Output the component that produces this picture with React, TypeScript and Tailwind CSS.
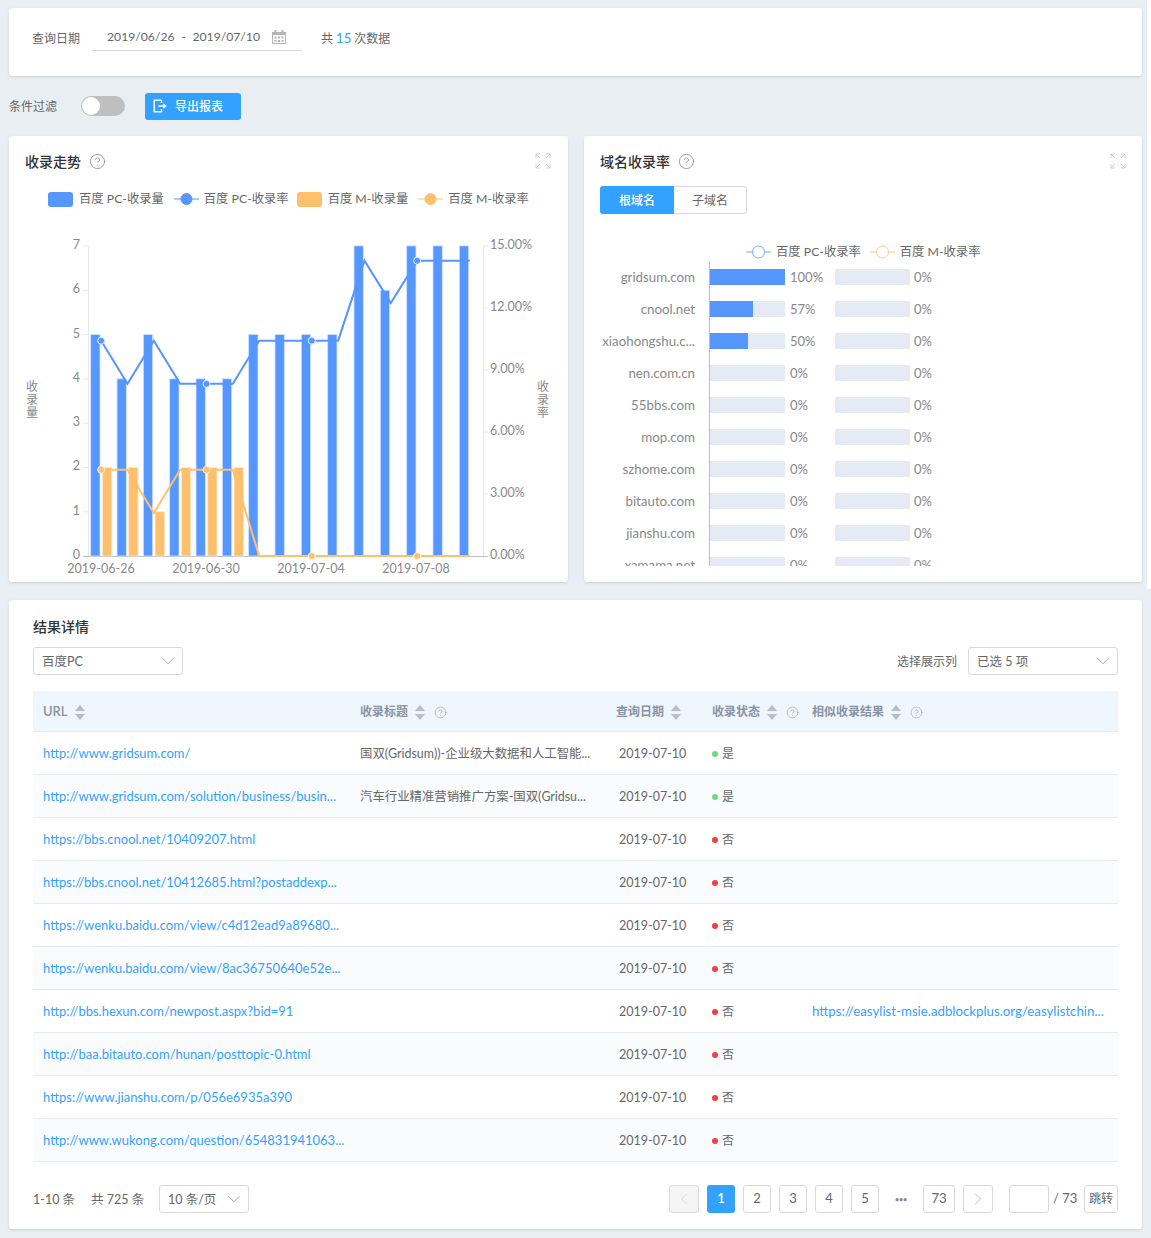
import type { ReactNode } from 'react';
import { ChevronDown, ChevronLeft, ChevronRight, CircleHelp } from 'lucide-react';

const blueBars = [5, 4, 5, 4, 4, 4, 5, 5, 5, 5, 7, 6, 7, 7, 7];
const orangeBars = [2, 2, 1, 2, 2, 2, 0, 0, 0, 0, 0, 0, 0, 0, 0];
const blueRate = [10.42, 8.33, 10.42, 8.33, 8.33, 8.33, 10.42, 10.42, 10.42, 10.42, 14.29, 12.24, 14.29, 14.29, 14.29];
const orangeRate = [4.17, 4.17, 2.08, 4.17, 4.17, 4.17, 0, 0, 0, 0, 0, 0, 0, 0, 0];

const domains = [
  ['gridsum.com', 100],
  ['cnool.net', 57],
  ['xiaohongshu.c...', 50],
  ['nen.com.cn', 0],
  ['55bbs.com', 0],
  ['mop.com', 0],
  ['szhome.com', 0],
  ['bitauto.com', 0],
  ['jianshu.com', 0],
  ['xamama.net', 0],
] as const;

const rows = [
  { url: 'http://www.gridsum.com/', title: '国双(Gridsum))-企业级大数据和人工智能...', ok: true },
  { url: 'http://www.gridsum.com/solution/business/busin...', title: '汽车行业精准营销推广方案-国双(Gridsu...', ok: true },
  { url: 'https://bbs.cnool.net/10409207.html' },
  { url: 'https://bbs.cnool.net/10412685.html?postaddexp...' },
  { url: 'https://wenku.baidu.com/view/c4d12ead9a89680...' },
  { url: 'https://wenku.baidu.com/view/8ac36750640e52e...' },
  { url: 'http://bbs.hexun.com/newpost.aspx?bid=91', similar: 'https://easylist-msie.adblockplus.org/easylistchin...' },
  { url: 'http://baa.bitauto.com/hunan/posttopic-0.html' },
  { url: 'https://www.jianshu.com/p/056e6935a390' },
  { url: 'http://www.wukong.com/question/654831941063...' },
];

const xAt = (i: number) => 88 + i * 26.33;
const yCount = (v: number) => 556 - v * 44.3;
const yRate = (v: number) => 556 - (v / 15) * 310;

function ExpandIcon() {
  return (
    <svg width="16" height="16" viewBox="0 0 16 16" fill="none" stroke="#c9cdd3" strokeWidth="1">
      <path d="M1 5V1h4M1 1l4 4M11 1h4v4M15 1l-4 4M1 11v4h4M1 15l4-4M11 15h4v-4M15 15l-4-4" />
    </svg>
  );
}

function SortIcon() {
  return (
    <svg width="10" height="15" viewBox="0 0 10 15" fill="#b6bdcb">
      <path d="M5 0L10 6H0zM0 9h10l-5 6z" />
    </svg>
  );
}

function Help() {
  return <CircleHelp size={17} strokeWidth={1} className="text-[#777]" />;
}

function Select({ label, width }: { label: string; width: string }) {
  return (
    <div className={`flex h-[28px] items-center justify-between rounded-[3px] border border-[#d9d9d9] bg-white pl-2 pr-[3px] text-[12.5px] text-[#666] ${width}`}>
      <span className="pt-[2px]">{label}</span>
      <ChevronDown size={22} strokeWidth={0.8} className="text-[#888]" />
    </div>
  );
}

function TrendChart() {
  return (
    <svg viewBox="9 226 559 356" className="block h-[356px] w-[559px]">
      <path d="M88.5 246V556M83 246h5M83 290.3h5M83 334.6h5M83 378.9h5M83 423.2h5M83 467.5h5M83 511.8h5" stroke="#e8e8e8" fill="none" />
      <path d="M483.5 246V556M483 246h5M483 308h5M483 370h5M483 432h5M483 494h5" stroke="#e8e8e8" fill="none" />
      <path d="M83 556.5H488" stroke="#b9bfca" fill="none" />
      {blueBars.map((v, i) => (
        <rect key={i} x={xAt(i) + 2.7} y={yCount(v)} width={9.3} height={v * 44.3} fill="#5596ff" stroke="#cfe0ff" strokeWidth="0.8" />
      ))}
      {orangeBars.map((v, i) =>
        v > 0 ? (
          <rect key={i} x={xAt(i) + 14.4} y={yCount(v)} width={9.3} height={v * 44.3} fill="#ffc06e" stroke="#ffe8c8" strokeWidth="0.8" />
        ) : null
      )}
      <polyline points={blueRate.map((v, i) => `${xAt(i) + 13.17},${yRate(v)}`).join(' ')} fill="none" stroke="#5596ff" strokeWidth="2" />
      <polyline points={orangeRate.map((v, i) => `${xAt(i) + 13.17},${yRate(v)}`).join(' ')} fill="none" stroke="#ffc06e" strokeWidth="2" />
      {[0, 4, 8, 12].map((i) => (
        <g key={i}>
          <circle cx={xAt(i) + 13.17} cy={yRate(blueRate[i])} r="3.5" fill="#5596ff" stroke="#e8f0ff" />
          <circle cx={xAt(i) + 13.17} cy={yRate(orangeRate[i])} r="3.5" fill="#ffc06e" stroke="#fff3e0" />
        </g>
      ))}
      <g fill="#888" fontSize="12.5">
        {[0, 1, 2, 3, 4, 5, 6, 7].map((n) => (
          <text key={n} x="80" y={yCount(n) + 3} textAnchor="end">{n}</text>
        ))}
        {['0.00%', '3.00%', '6.00%', '9.00%', '12.00%', '15.00%'].map((t, i) => (
          <text key={t} x="490" y={556 - i * 62 + 3}>{t}</text>
        ))}
        {[['2019-06-26', 101], ['2019-06-30', 206], ['2019-07-04', 311], ['2019-07-08', 416]].map(([t, x]) => (
          <text key={t} x={x} y="573" textAnchor="middle">{t}</text>
        ))}
      </g>
      <g fill="#888" fontSize="12">
        {['收', '录', '量'].map((t, i) => (
          <text key={t} x="32" y={391 + i * 13} textAnchor="middle">{t}</text>
        ))}
        {['收', '录', '率'].map((t, i) => (
          <text key={t} x="543" y={391 + i * 13} textAnchor="middle">{t}</text>
        ))}
      </g>
    </svg>
  );
}

function LegendBox({ color, label }: { color: string; label: string }) {
  return (
    <div className="flex items-center gap-[6px]">
      <span className={`h-[15px] w-[25px] rounded-[3px] ${color}`} />
      <span>{label}</span>
    </div>
  );
}

function LegendLine({ color, label, hollow }: { color: string; label: string; hollow?: boolean }) {
  return (
    <div className="flex items-center gap-[5px]">
      <svg width="25" height="14" viewBox="0 0 25 14" fill="none" stroke={color}>
        <path d="M0 7h25" />
        <circle cx="12.5" cy="7" r={hollow ? 6 : 5.5} fill={hollow ? '#fff' : color} />
      </svg>
      <span>{label}</span>
    </div>
  );
}

function DomainRate() {
  return (
    <div className="-mt-[1px] h-[305px] overflow-hidden">
      {domains.map(([name, pct]) => (
        <div key={name} className="flex h-[32px] items-center text-[13px] text-[#888]">
          <span className="w-[111px] shrink-0 pt-[2px] text-right text-[13.3px]">{name}</span>
          <div className="ml-[14px] flex h-full items-center border-l border-[#b9bfca]">
            <div className="h-[16px] w-[75px] shrink-0 bg-[#e6eaf5]">
              <div className="h-full bg-[#5596ff]" style={{ width: `${pct}%` }} />
            </div>
            <span className="ml-[5px] w-[45px] shrink-0 pt-[2px]">{pct}%</span>
            <div className="h-[16px] w-[75px] shrink-0 bg-[#e6eaf5]" />
            <span className="ml-[4px] pt-[2px]">0%</span>
          </div>
        </div>
      ))}
    </div>
  );
}

function PageButton({ children, active, disabled, width }: { children?: ReactNode; active?: boolean; disabled?: boolean; width: string }) {
  const tone = active
    ? 'bg-[#33a1ff] text-white font-semibold'
    : disabled
      ? 'border border-[#d9d9d9] bg-[#f5f5f5] text-[#ccc]'
      : 'border border-[#d9d9d9] bg-white text-[#666]';
  return <div className={`flex h-[28px] items-center justify-center rounded-[3px] text-[13px] ${width} ${tone}`}>{children}</div>;
}

function HeaderCell({ label, help, bold }: { label: string; help?: boolean; bold?: boolean }) {
  return (
    <th className="border-b border-[#e8ecf1] px-[10px] pt-[2px] text-left font-normal">
      <div className={`flex items-center whitespace-nowrap font-semibold text-[#8a93a3] ${bold ? 'text-[13px]' : 'text-[12px]'}`}>
        <span>{label}</span>
        <span className="ml-[7px]"><SortIcon /></span>
        {help && <span className="ml-[9px]"><CircleHelp size={13} strokeWidth={1} className="text-[#8a93a3]" /></span>}
      </div>
    </th>
  );
}

export default function App() {
  return (
    <div
      className="relative flex min-h-[1238px] flex-col bg-[#e9eef3] px-[9px] pb-[9px] pt-[8px] text-[13px] text-[#666]"
      style={{ fontFamily: 'Lato, "Noto Sans CJK SC", sans-serif' }}
    >
      <div className="absolute right-0 top-0 h-[589px] w-[4px] bg-white" />

      <div className="flex h-[68px] items-center rounded-[3px] bg-white pb-[6px] pl-[23px] shadow-sm">
        <span className="text-[12px]">查询日期</span>
        <div className="ml-[12px] flex h-[24px] w-[210px] items-center justify-between border-b border-[#d9d9d9] pb-[3px] pl-[15px] pr-[16px]">
          <div className="flex w-[153px] justify-between pt-[1px] text-[12.2px]">
            <span>2019/06/26</span>
            <span>-</span>
            <span>2019/07/10</span>
          </div>
          <svg width="14" height="14" viewBox="0 0 14 14" fill="#b5b5b5">
            <path d="M0 2h2.5V0h2v2h5V0h2v2H14v12H0zM1 5v8h12V5zM2.5 6.5h2v2h-2zM6 6.5h2v2H6zM9.5 6.5h2v2h-2zM2.5 10h2v2h-2zM6 10h2v2H6zM9.5 10h2v2h-2z" />
          </svg>
        </div>
        <span className="ml-[19px] text-[12px]">共 <span className="text-[13px] text-[#33a1ff]">15</span> 次数据</span>
      </div>

      <div className="flex h-[60px] items-center">
        <span className="pt-[2px] text-[12px]">条件过滤</span>
        <div className="ml-[24px] flex h-[20px] w-[44px] items-center rounded-full bg-[#bfbfbf] pl-[1px]">
          <span className="h-[18px] w-[18px] rounded-full bg-white" />
        </div>
        <div className="ml-[20px] flex h-[27px] w-[96px] items-center rounded-[3px] bg-[#33a1ff] pl-[8px] text-[12px] font-medium text-white">
          <svg width="14" height="14" viewBox="0 0 14 14" fill="none" stroke="currentColor" strokeWidth="1.4">
            <path d="M8.5 4V1.2H1.2v11.6h7.3V10" strokeLinejoin="round" />
            <path d="M5.5 7h7M10.5 5l2.2 2-2.2 2" />
          </svg>
          <span className="ml-[8px] pt-[1px]">导出报表</span>
        </div>
      </div>

      <div className="flex gap-[16px]">
        <div className="h-[446px] w-[559px] rounded-[3px] bg-white shadow-sm">
          <div className="flex h-[50px] items-center justify-between pl-[16px] pr-[17px]">
            <div className="flex items-center gap-[8px] pt-[1px]">
              <span className="text-[14px] font-medium text-[#333]">收录走势</span>
              <Help />
            </div>
            <ExpandIcon />
          </div>
          <div className="flex h-[26px] items-center pl-[39px] text-[12.3px] text-[#666]">
            <LegendBox color="bg-[#5596ff]" label="百度 PC-收录量" />
            <div className="ml-[10px]"><LegendLine color="#5596ff" label="百度 PC-收录率" /></div>
            <div className="ml-[8px]"><LegendBox color="bg-[#ffc06e]" label="百度 M-收录量" /></div>
            <div className="ml-[10px]"><LegendLine color="#ffc06e" label="百度 M-收录率" /></div>
          </div>
          <div className="mt-[14px]"><TrendChart /></div>
        </div>

        <div className="h-[446px] w-[558px] rounded-[3px] bg-white shadow-sm">
          <div className="flex h-[50px] items-center justify-between pl-[16px] pr-[16px]">
            <div className="flex items-center gap-[8px] pt-[1px]">
              <span className="text-[14px] font-medium text-[#333]">域名收录率</span>
              <Help />
            </div>
            <ExpandIcon />
          </div>
          <div className="flex pl-[16px] text-[12px]">
            <div className="flex h-[28px] w-[74px] items-center justify-center rounded-l-[3px] bg-[#33a1ff] pt-[1px] font-medium text-white">根域名</div>
            <div className="flex h-[28px] w-[73px] items-center justify-center rounded-r-[3px] border border-l-0 border-[#d9d9d9] pt-[1px] text-[#666]">子域名</div>
          </div>
          <div className="mt-[28px] flex h-[20px] items-center gap-[9px] pl-[162px] text-[12.3px] text-[#666]">
            <LegendLine color="#7aa9ff" label="百度 PC-收录率" hollow />
            <LegendLine color="#ffc98a" label="百度 M-收录率" hollow />
          </div>
          <DomainRate />
        </div>
      </div>

      <div className="mt-[18px] h-[629px] rounded-[3px] bg-white px-[24px] shadow-sm">
        <div className="pt-[17px] text-[14px] font-medium leading-[20px] text-[#333]">结果详情</div>
        <div className="mt-[10px] flex items-center justify-between">
          <Select label="百度PC" width="w-[150px]" />
          <div className="flex items-center gap-[11px]">
            <span className="pt-[1px] text-[12px]">选择展示列</span>
            <Select label="已选 5 项" width="w-[150px]" />
          </div>
        </div>
        <table className="mt-[16px] w-[1085px] table-fixed border-separate border-spacing-0">
          <colgroup>
            <col className="w-[317px]" />
            <col className="w-[256px]" />
            <col className="w-[96px]" />
            <col className="w-[100px]" />
            <col className="w-[316px]" />
          </colgroup>
          <thead>
            <tr className="h-[41px] bg-[#eff6fd]">
              <HeaderCell label="URL" bold />
              <HeaderCell label="收录标题" help />
              <HeaderCell label="查询日期" />
              <HeaderCell label="收录状态" help />
              <HeaderCell label="相似收录结果" help />
            </tr>
          </thead>
          <tbody>
            {rows.map((row, i) => (
              <tr key={row.url} className={`h-[43px] ${i % 2 === 1 ? 'bg-[#fafbfd]' : 'bg-white'}`}>
                <td className="whitespace-nowrap border-b border-[#e8ecf1] px-[10px] pt-[2px] text-[13px] text-[#33a1ff]">{row.url}</td>
                <td className="whitespace-nowrap border-b border-[#e8ecf1] px-[10px] pt-[2px] text-[12.4px] text-[#666]">{row.title}</td>
                <td className="border-b border-[#e8ecf1] pl-[13px] pt-[2px] text-[12.5px] text-[#666]">2019-07-10</td>
                <td className="border-b border-[#e8ecf1] px-[10px] pt-[2px] text-[12px]">
                  <span className="flex items-center gap-[4px]">
                    <span className={`h-[6px] w-[6px] rounded-full ${row.ok ? 'bg-[#6fdc7c]' : 'bg-[#f04040]'}`} />
                    {row.ok ? '是' : '否'}
                  </span>
                </td>
                <td className="whitespace-nowrap border-b border-[#e8ecf1] px-[10px] pt-[2px] text-[13.25px] text-[#33a1ff]">{row.similar}</td>
              </tr>
            ))}
          </tbody>
        </table>
        <div className="mt-[23px] flex items-center justify-between">
          <div className="flex items-center text-[12.5px]">
            <span className="w-[58px] pt-[2px]">1-10 条</span>
            <span className="w-[68px] pt-[2px]">共 725 条</span>
            <Select label="10 条/页" width="w-[90px]" />
          </div>
          <div className="flex items-center gap-[8px]">
            <PageButton disabled width="w-[30px]"><ChevronLeft size={20} strokeWidth={0.9} /></PageButton>
            <PageButton active width="w-[28px]">1</PageButton>
            <PageButton width="w-[28px]">2</PageButton>
            <PageButton width="w-[28px]">3</PageButton>
            <PageButton width="w-[28px]">4</PageButton>
            <PageButton width="w-[28px]">5</PageButton>
            <div className="flex w-[28px] justify-center text-[7px] font-bold leading-none text-[#888]">•••</div>
            <PageButton width="w-[32px]">73</PageButton>
            <PageButton width="w-[30px]"><ChevronRight size={20} strokeWidth={0.9} className="text-[#aaa]" /></PageButton>
            <div className="ml-[8px] h-[28px] w-[40px] rounded-[3px] border border-[#d9d9d9]" />
            <span className="-ml-[4px] w-[23px] whitespace-nowrap">/ 73</span>
            <PageButton width="w-[34px]"><span className="text-[12px]">跳转</span></PageButton>
          </div>
        </div>
      </div>
    </div>
  );
}
